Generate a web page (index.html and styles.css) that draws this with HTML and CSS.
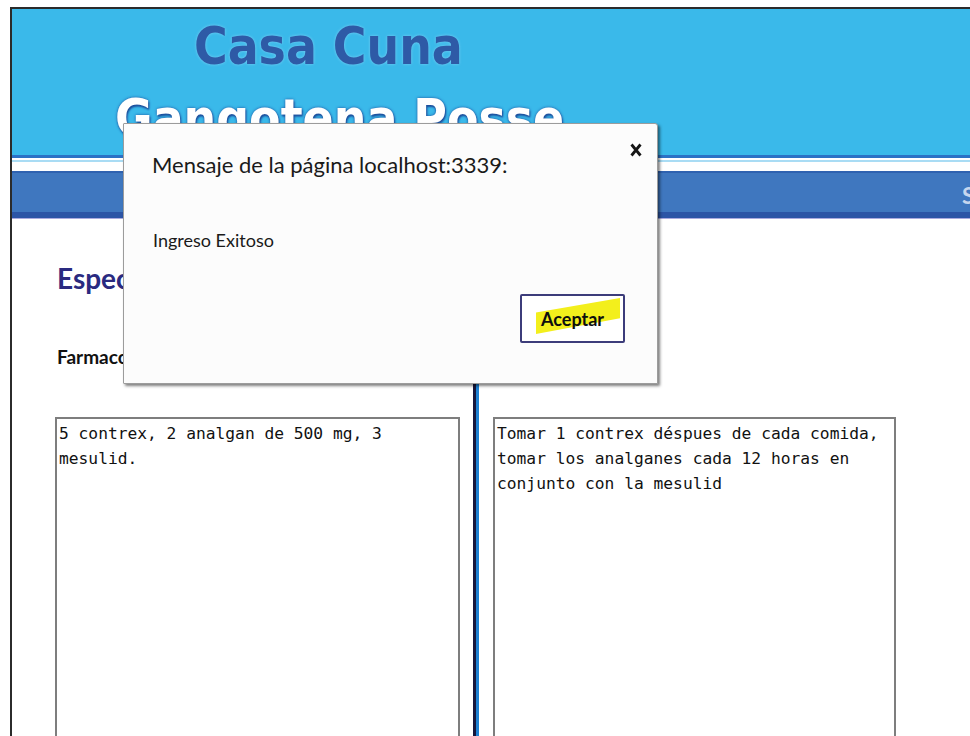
FILE: index.html
```html
<!DOCTYPE html>
<html lang="es">
<head>
<meta charset="utf-8">
<title>Casa Cuna Gangotena Posse</title>
<link rel="stylesheet" href="styles.css">
</head>
<body>
  <div class="window">
    <header class="masthead">
      <div class="brand">
        <span class="brand-line brand-top">Casa Cuna</span>
        <span class="brand-line brand-bottom">Gangotena Posse</span>
      </div>
    </header>
    <div class="rule"></div>
    <nav class="menu">
      <a class="menu-link" href="#">Salir</a>
    </nav>
    <main class="content">
      <h1 class="page-title">Especificaciones</h1>
      <div class="columns">
        <section class="field">
          <h2 class="field-label">Farmacos:</h2>
          <textarea class="field-box" readonly>5 contrex, 2 analgan de 500 mg, 3 mesulid.</textarea>
        </section>
        <div class="divider"></div>
        <section class="field">
          <h2 class="field-label">Indicaciones:</h2>
          <textarea class="field-box" readonly>Tomar 1 contrex déspues de cada comida, tomar los analganes cada 12 horas en conjunto con la mesulid</textarea>
        </section>
      </div>
    </main>
  </div>

  <div class="dialog" role="alertdialog">
    <div class="dialog-head">
      <p class="dialog-title">Mensaje de la página localhost:3339:</p>
      <svg class="dialog-close" width="12" height="14" viewBox="0 0 12 14" aria-hidden="true">
        <path d="M1.5 1.5 L10.5 12.5 M10.5 1.5 L1.5 12.5" stroke="#151515" stroke-width="2.8" stroke-linecap="butt" fill="none"/>
      </svg>
    </div>
    <p class="dialog-message">Ingreso Exitoso</p>
    <div class="dialog-actions">
      <button class="dialog-button" type="button"><span class="dialog-button-text">Aceptar</span></button>
    </div>
  </div>
</body>
</html>
```

FILE: styles.css
```css
html,
body {
  margin: 0;
  height: 100%;
  overflow: hidden;
  background: #ffffff;
}

body {
  font-family: "Lato", "Liberation Sans", sans-serif;
  color: #111;
}

/* page frame */
.window {
  margin: 7px 0 0 10px;
  border-top: 2px solid #2b2b2b;
  border-left: 2px solid #2b2b2b;
  height: 760px;
  overflow: hidden;
}

/* header */
.masthead {
  box-sizing: border-box;
  height: 149px;
  background: #3ab9ea;
  border-bottom: 3px solid #2b71c5;
}

.brand {
  display: flex;
  flex-direction: column;
  align-items: flex-start;
  padding-top: 2px;
  font-family: "DejaVu Sans Condensed", "DejaVu Sans", sans-serif;
  font-stretch: condensed;
  font-weight: 700;
  font-size: 51px;
  line-height: 72px;
  white-space: nowrap;
}

.brand-top {
  margin-left: 182px;
  color: #2e5aa6;
  text-shadow: 0 0 3px rgba(150, 220, 250, 0.7);
}

.brand-bottom {
  margin-left: 103px;
  color: #ffffff;
  text-shadow: 0 0 3px #1d4f9d, 1px 2px 2px #1d4f9d;
}

.rule {
  height: 13px;
  background: linear-gradient(to bottom,
    #ffffff 0 2px,
    #a9dcf4 2px 4px,
    #ffffff 4px 13px);
}

/* navigation bar */
.menu {
  display: flex;
  justify-content: flex-end;
  align-items: center;
  height: 48px;
  background: linear-gradient(to bottom,
    #2f62b0 0 2px,
    #3f77bf 2px 41px,
    #2c55a6 41px 47px,
    #aaaade 47px 48px);
}

.menu-link {
  margin-right: -40px;
  width: 48px;
  font-family: "Lato", sans-serif;
  font-weight: 700;
  font-size: 23px;
  color: #c6d6ee;
  text-decoration: none;
}

/* main content */
.content {
  padding-left: 43px;
}

.page-title {
  margin: 42px 0 0 2px;
  font-size: 28px;
  line-height: 34px;
  font-weight: 700;
  color: #2a2a80;
}

.columns {
  display: grid;
  grid-template-columns: 405px 6px 404px;
  column-gap: 13px;
  margin-top: 50px;
}

.columns > .field:last-child {
  margin-left: 1px;
}

.field-label {
  margin: 0 0 48px 2px;
  font-size: 19px;
  line-height: 24px;
  font-weight: 700;
  color: #111;
}

.field-box {
  display: block;
  box-sizing: border-box;
  width: 100%;
  height: 340px;
  margin: 0;
  padding: 2px 2px;
  border: 2px solid #7e7e7e;
  border-radius: 0;
  background: #fff;
  font-family: "DejaVu Sans Mono", "Liberation Mono", monospace;
  font-size: 16.25px;
  line-height: 25px;
  color: #111;
  resize: none;
  overflow: hidden;
}

.divider {
  box-sizing: border-box;
  border-left: 3px solid #16163c;
  background: #1d80d2;
}

/* alert dialog */
.dialog {
  position: absolute;
  left: 123px;
  top: 123px;
  box-sizing: border-box;
  width: 535px;
  height: 261px;
  background: #fcfcfc;
  border: 1px solid #9c9c9c;
  border-radius: 1px 3px 1px 1px;
  box-shadow: 2px 2px 3px rgba(0, 0, 0, 0.5);
}

.dialog-head {
  display: flex;
  justify-content: space-between;
  align-items: flex-start;
  padding: 0 15px 0 28px;
}

.dialog-title {
  margin: 28px 0 0;
  font-size: 22px;
  line-height: 26px;
  color: #1a1a1a;
}

.dialog-close {
  margin-top: 19px;
}

.dialog-message {
  margin: 51px 0 0 29px;
  font-size: 18px;
  line-height: 22px;
  color: #1a1a1a;
}

.dialog-actions {
  display: flex;
  justify-content: flex-end;
  padding-right: 32px;
  margin-top: 43px;
}

.dialog-button {
  position: relative;
  box-sizing: border-box;
  width: 105px;
  height: 49px;
  padding: 0 0 0 19px;
  border: 2px solid #3c3c7a;
  border-radius: 2px;
  background: #ffffff;
  text-align: left;
  cursor: pointer;
}

/* yellow marker stroke behind the label */
.dialog-button::before {
  content: "";
  position: absolute;
  left: 14px;
  top: 2px;
  width: 84px;
  height: 36px;
  background: #f3ef1c;
  clip-path: polygon(0 40%, 100% 0, 100% 56%, 0 100%);
}

.dialog-button-text {
  position: relative;
  font-family: "Lato", sans-serif;
  font-weight: 700;
  font-size: 18px;
  color: #0e0e0e;
}
```
